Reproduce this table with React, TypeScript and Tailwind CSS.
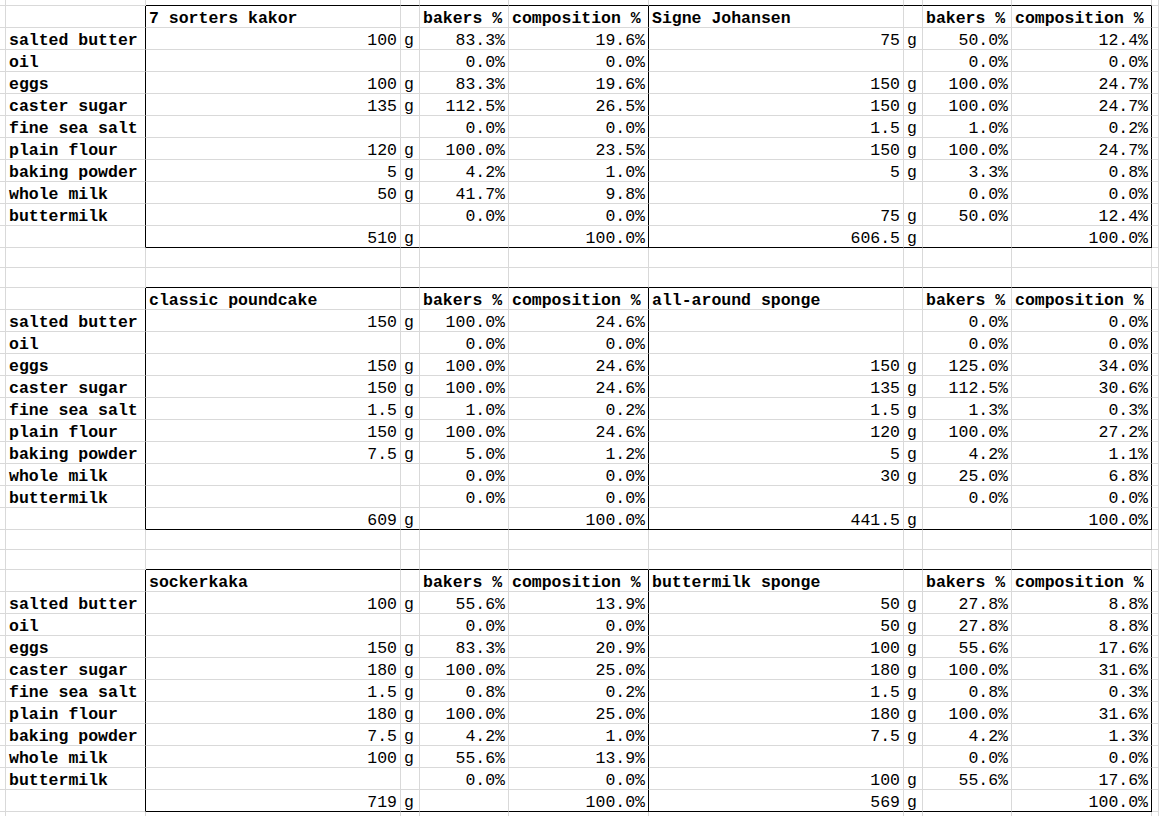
import React from 'react';
import clsx from 'clsx';

type Line = [string, string, string];

interface Recipe {
    name: string;
    rows: Line[];
    total: string;
}

interface CellSpec {
    text?: string;
    right?: boolean;
    bold?: boolean;
    rb?: boolean;
    bb?: boolean;
}

const INGREDIENTS = [
    'salted butter',
    'oil',
    'eggs',
    'caster sugar',
    'fine sea salt',
    'plain flour',
    'baking powder',
    'whole milk',
    'buttermilk',
];

const BLOCKS: [Recipe, Recipe][] = [
    [
        {
            name: '7 sorters kakor',
            rows: [
                ['100', '83.3%', '19.6%'],
                ['', '0.0%', '0.0%'],
                ['100', '83.3%', '19.6%'],
                ['135', '112.5%', '26.5%'],
                ['', '0.0%', '0.0%'],
                ['120', '100.0%', '23.5%'],
                ['5', '4.2%', '1.0%'],
                ['50', '41.7%', '9.8%'],
                ['', '0.0%', '0.0%'],
            ],
            total: '510',
        },
        {
            name: 'Signe Johansen',
            rows: [
                ['75', '50.0%', '12.4%'],
                ['', '0.0%', '0.0%'],
                ['150', '100.0%', '24.7%'],
                ['150', '100.0%', '24.7%'],
                ['1.5', '1.0%', '0.2%'],
                ['150', '100.0%', '24.7%'],
                ['5', '3.3%', '0.8%'],
                ['', '0.0%', '0.0%'],
                ['75', '50.0%', '12.4%'],
            ],
            total: '606.5',
        },
    ],
    [
        {
            name: 'classic poundcake',
            rows: [
                ['150', '100.0%', '24.6%'],
                ['', '0.0%', '0.0%'],
                ['150', '100.0%', '24.6%'],
                ['150', '100.0%', '24.6%'],
                ['1.5', '1.0%', '0.2%'],
                ['150', '100.0%', '24.6%'],
                ['7.5', '5.0%', '1.2%'],
                ['', '0.0%', '0.0%'],
                ['', '0.0%', '0.0%'],
            ],
            total: '609',
        },
        {
            name: 'all-around sponge',
            rows: [
                ['', '0.0%', '0.0%'],
                ['', '0.0%', '0.0%'],
                ['150', '125.0%', '34.0%'],
                ['135', '112.5%', '30.6%'],
                ['1.5', '1.3%', '0.3%'],
                ['120', '100.0%', '27.2%'],
                ['5', '4.2%', '1.1%'],
                ['30', '25.0%', '6.8%'],
                ['', '0.0%', '0.0%'],
            ],
            total: '441.5',
        },
    ],
    [
        {
            name: 'sockerkaka',
            rows: [
                ['100', '55.6%', '13.9%'],
                ['', '0.0%', '0.0%'],
                ['150', '83.3%', '20.9%'],
                ['180', '100.0%', '25.0%'],
                ['1.5', '0.8%', '0.2%'],
                ['180', '100.0%', '25.0%'],
                ['7.5', '4.2%', '1.0%'],
                ['100', '55.6%', '13.9%'],
                ['', '0.0%', '0.0%'],
            ],
            total: '719',
        },
        {
            name: 'buttermilk sponge',
            rows: [
                ['50', '27.8%', '8.8%'],
                ['50', '27.8%', '8.8%'],
                ['100', '55.6%', '17.6%'],
                ['180', '100.0%', '31.6%'],
                ['1.5', '0.8%', '0.3%'],
                ['180', '100.0%', '31.6%'],
                ['7.5', '4.2%', '1.3%'],
                ['', '0.0%', '0.0%'],
                ['100', '55.6%', '17.6%'],
            ],
            total: '569',
        },
    ],
];

// blank row; optionally with the black top edge of a table below it
const blankRow = (topOfTable = false): CellSpec[] =>
    Array.from({ length: 11 }, (_, i) => ({ bb: topOfTable && i >= 2 && i <= 9 }));

const headerRow = (l: Recipe, r: Recipe): CellSpec[] => [
    {},
    { rb: true },
    { text: l.name, bold: true },
    {},
    { text: 'bakers %', bold: true },
    { text: 'composition %', bold: true, rb: true },
    { text: r.name, bold: true },
    {},
    { text: 'bakers %', bold: true },
    { text: 'composition %', bold: true, rb: true },
    {},
];

const ingredientRow = (name: string, a: Line, b: Line): CellSpec[] => [
    {},
    { text: name, bold: true, rb: true },
    { text: a[0], right: true },
    { text: a[0] ? 'g' : '' },
    { text: a[1], right: true },
    { text: a[2], right: true, rb: true },
    { text: b[0], right: true },
    { text: b[0] ? 'g' : '' },
    { text: b[1], right: true },
    { text: b[2], right: true, rb: true },
    {},
];

const totalRow = (l: Recipe, r: Recipe): CellSpec[] => [
    {},
    { rb: true },
    { text: l.total, right: true, bb: true },
    { text: 'g', bb: true },
    { bb: true },
    { text: '100.0%', right: true, rb: true, bb: true },
    { text: r.total, right: true, bb: true },
    { text: 'g', bb: true },
    { bb: true },
    { text: '100.0%', right: true, rb: true, bb: true },
    {},
];

const SheetRow: React.FC<{ cells: CellSpec[]; height: string }> = ({ cells, height }) => (
    <div className={clsx('grid grid-cols-[6px_140px_255px_19px_89px_140px_255px_19px_89px_140px_1fr]', height)}>
        {cells.map((c, i) => (
            <div
                key={i}
                className={clsx(
                    'overflow-hidden whitespace-nowrap border-r border-b pt-[5px] leading-[16px]',
                    c.rb ? 'border-r-black' : 'border-r-[#d9d9d9]',
                    c.bb ? 'border-b-black' : 'border-b-[#d9d9d9]',
                    c.right ? 'text-right pr-[3px]' : 'pl-[3px]',
                    c.bold && 'font-bold'
                )}
            >
                {c.text}
            </div>
        ))}
    </div>
);

export default function App() {
    const rows: { cells: CellSpec[]; height: string }[] = [];
    rows.push({ cells: blankRow(true), height: 'h-[6px]' });

    BLOCKS.forEach(([left, right], b) => {
        rows.push({ cells: headerRow(left, right), height: 'h-[22px]' });
        INGREDIENTS.forEach((name, i) => {
            rows.push({ cells: ingredientRow(name, left.rows[i], right.rows[i]), height: 'h-[22px]' });
        });
        rows.push({ cells: totalRow(left, right), height: 'h-[22px]' });
        if (b < BLOCKS.length - 1) {
            rows.push({ cells: blankRow(), height: 'h-[20px]' });
            rows.push({ cells: blankRow(true), height: 'h-[20px]' });
        }
    });
    rows.push({ cells: blankRow(), height: 'h-[20px]' });

    return (
        <div className="h-[816px] w-full overflow-hidden bg-white font-['Liberation_Mono','Courier_New',monospace] text-[16.5px] text-black">
            {rows.map((r, i) => (
                <SheetRow key={i} cells={r.cells} height={r.height} />
            ))}
        </div>
    );
}
